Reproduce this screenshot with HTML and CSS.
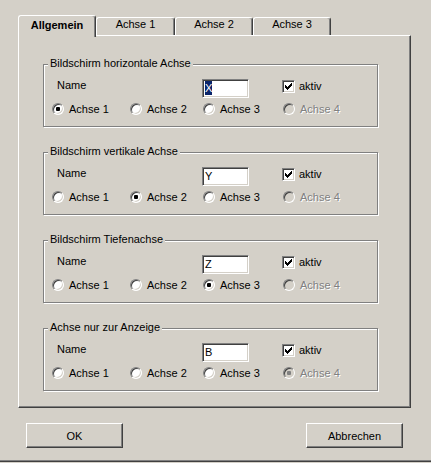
FILE: index.html
```html
<!DOCTYPE html>
<html lang="de">
<head>
  <meta charset="UTF-8" />
  <title>Achsen</title>
  <link rel="stylesheet" href="styles.css">
</head>
<body>
  <div class="dialog">
    <div class="tabs">
      <div class="tab active">Allgemein</div>
      <div class="tab wide">Achse 1</div>
      <div class="tab">Achse 2</div>
      <div class="tab">Achse 3</div>
    </div>

    <div class="panel">
      <div class="group">
        <div class="group-title">Bildschirm horizontale Achse</div>
        <div class="group-body">
          <span class="name">Name</span>
          <div class="edit"><span class="sel">X</span></div>
          <div class="check"><span class="box"><svg width="11" height="11" viewBox="1 1 11 11"><path d="M3 5h1v1h1v1h1v-1h1v-1h1v-1h1v-1h1v3h-1v1h-1v1h-1v1h-1v1h-1v-1h-1v-1h-1z" fill="#000" shape-rendering="crispEdges"/></svg></span>aktiv</div>
          <div class="option"><span class="radio checked"></span>Achse 1</div>
          <div class="option"><span class="radio"></span>Achse 2</div>
          <div class="option"><span class="radio"></span>Achse 3</div>
          <div class="option disabled"><span class="radio"></span>Achse 4</div>
        </div>
      </div>

      <div class="group">
        <div class="group-title">Bildschirm vertikale Achse</div>
        <div class="group-body">
          <span class="name">Name</span>
          <div class="edit">Y</div>
          <div class="check"><span class="box"><svg width="11" height="11" viewBox="1 1 11 11"><path d="M3 5h1v1h1v1h1v-1h1v-1h1v-1h1v-1h1v3h-1v1h-1v1h-1v1h-1v1h-1v-1h-1v-1h-1z" fill="#000" shape-rendering="crispEdges"/></svg></span>aktiv</div>
          <div class="option"><span class="radio"></span>Achse 1</div>
          <div class="option"><span class="radio checked"></span>Achse 2</div>
          <div class="option"><span class="radio"></span>Achse 3</div>
          <div class="option disabled"><span class="radio"></span>Achse 4</div>
        </div>
      </div>

      <div class="group">
        <div class="group-title">Bildschirm Tiefenachse</div>
        <div class="group-body">
          <span class="name">Name</span>
          <div class="edit">Z</div>
          <div class="check"><span class="box"><svg width="11" height="11" viewBox="1 1 11 11"><path d="M3 5h1v1h1v1h1v-1h1v-1h1v-1h1v-1h1v3h-1v1h-1v1h-1v1h-1v1h-1v-1h-1v-1h-1z" fill="#000" shape-rendering="crispEdges"/></svg></span>aktiv</div>
          <div class="option"><span class="radio"></span>Achse 1</div>
          <div class="option"><span class="radio"></span>Achse 2</div>
          <div class="option"><span class="radio checked"></span>Achse 3</div>
          <div class="option disabled"><span class="radio"></span>Achse 4</div>
        </div>
      </div>

      <div class="group">
        <div class="group-title">Achse nur zur Anzeige</div>
        <div class="group-body">
          <span class="name">Name</span>
          <div class="edit">B</div>
          <div class="check"><span class="box"><svg width="11" height="11" viewBox="1 1 11 11"><path d="M3 5h1v1h1v1h1v-1h1v-1h1v-1h1v-1h1v3h-1v1h-1v1h-1v1h-1v1h-1v-1h-1v-1h-1z" fill="#000" shape-rendering="crispEdges"/></svg></span>aktiv</div>
          <div class="option"><span class="radio"></span>Achse 1</div>
          <div class="option"><span class="radio"></span>Achse 2</div>
          <div class="option"><span class="radio"></span>Achse 3</div>
          <div class="option disabled"><span class="radio checked"></span>Achse 4</div>
        </div>
      </div>
    </div>

    <div class="buttons">
      <button>OK</button>
      <button>Abbrechen</button>
    </div>
  </div>
</body>
</html>
```

FILE: styles.css
```css
:root {
  --face: #d4d0c8;
  --shadow: #808080;
  --dark: #404040;
  --light: #fff;
}

body {
  margin: 0;
  background-color: var(--face);
  font-family: 'Liberation Sans', Arial, sans-serif;
  font-size: 11px;
  color: #000;
}

.dialog {
  box-sizing: border-box;
  height: 462px;
  padding: 15px 20px 0 18px;
  border-bottom: 1px solid var(--dark);
  box-shadow: inset 0 -1px var(--shadow);
}

/* tab strip */
.tabs {
  display: flex;
  align-items: flex-end;
  height: 20px;
}

.tab {
  flex: none;
  box-sizing: border-box;
  width: 78px;
  height: 18px;
  border: 1px solid;
  border-color: var(--light) var(--dark) transparent var(--light);
  border-bottom: none;
  border-radius: 3px 3px 0 0;
  box-shadow: inset -1px 0 var(--shadow);
  text-align: center;
  line-height: 13px;
}

.tab.wide {
  width: 79px;
}

.tab.active {
  position: relative;
  z-index: 1;
  height: 22px;
  margin-bottom: -2px;
  padding-top: 3px;
  background-color: var(--face);
  font-weight: bold;
}

.panel {
  box-sizing: border-box;
  width: 393px;
  height: 373px;
  padding: 28px 32px 0 24px;
  border: 1px solid;
  border-color: var(--light) var(--dark) var(--dark) var(--light);
  box-shadow: inset -1px -1px var(--shadow);
  display: flex;
  flex-direction: column;
  gap: 25px;
}

/* group boxes */
.group {
  box-sizing: border-box;
  height: 63px;
  border: 1px solid var(--shadow);
  box-shadow: inset 1px 1px var(--light), 1px 1px var(--light);
}

.group-title {
  width: fit-content;
  margin: -8px 0 0 4px;
  padding: 0 2px;
  line-height: 13px;
  background-color: var(--face);
}

.group-body {
  display: grid;
  grid-template-columns: 78px 73px 80px 1fr;
  grid-template-rows: 19px 14px;
  row-gap: 4px;
  margin-top: 9px;
  padding-left: 8px;
}

.name {
  grid-column: 1 / 3;
  align-self: start;
  padding-left: 5px;
  line-height: 13px;
}

.edit {
  box-sizing: border-box;
  width: 47px;
  height: 19px;
  margin-left: -1px;
  padding: 1px 0 0 2px;
  border: 1px solid;
  border-color: var(--shadow) var(--light) var(--light) var(--shadow);
  box-shadow: inset 1px 1px var(--dark), inset -1px -1px var(--face);
  background-color: #fff;
  line-height: 14px;
}

.sel {
  display: inline-block;
  background-color: #0a246a;
  color: #fff;
}

.check {
  display: flex;
  align-items: center;
  gap: 4px;
  align-self: start;
  margin: 1px 0 0 -1px;
  line-height: 13px;
}

.box {
  box-sizing: border-box;
  width: 13px;
  height: 13px;
  border: 1px solid;
  border-color: var(--shadow) var(--light) var(--light) var(--shadow);
  box-shadow: inset 1px 1px var(--dark), inset -1px -1px var(--face);
  background-color: #fff;
}

.box svg {
  display: block;
}

/* radio buttons */
.option {
  display: flex;
  align-items: center;
  gap: 5px;
  line-height: 13px;
}

.radio {
  box-sizing: border-box;
  width: 12px;
  height: 12px;
  border: 1px solid;
  border-color: var(--shadow) var(--light) var(--light) var(--shadow);
  border-radius: 50%;
  box-shadow: inset 1px 1px var(--dark), inset -1px -1px var(--face);
  background-color: #fff;
  display: flex;
  align-items: center;
  justify-content: center;
}

.radio.checked::after {
  content: '';
  width: 4px;
  height: 4px;
  border-radius: 1px;
  background-color: #000;
}

.option.disabled {
  color: var(--shadow);
  text-shadow: 1px 1px var(--light);
}

.option.disabled .radio {
  background-color: var(--face);
}

.option.disabled .radio.checked::after {
  background-color: var(--shadow);
}

/* dialog buttons */
.buttons {
  display: flex;
  justify-content: space-between;
  margin-top: 15px;
  padding: 0 8px;
  width: 393px;
  box-sizing: border-box;
}

button {
  box-sizing: border-box;
  width: 97px;
  height: 25px;
  padding: 0;
  border: 1px solid;
  border-color: var(--light) var(--dark) var(--dark) var(--light);
  box-shadow: inset -1px -1px var(--shadow);
  background-color: var(--face);
  font-family: inherit;
  font-size: 11px;
  color: #000;
}
```
